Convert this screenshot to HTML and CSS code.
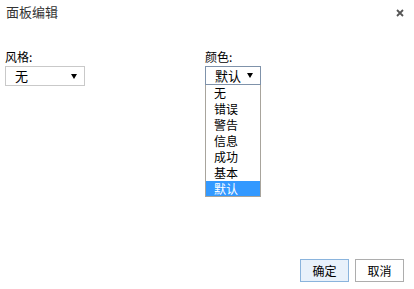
FILE: index.html
```html
<!DOCTYPE html>
<html lang="zh-CN">
<head>
	<meta charset="UTF-8">
	<title>面板编辑</title>
	<link rel="stylesheet" href="styles.css">
</head>
<body>
	<div class="dialog">
		<div class="header">
			<span class="title">面板编辑</span>
			<svg class="close" width="8" height="8" viewBox="0 0 8 8"><path d="M1 1L7 7M7 1L1 7" stroke="#555" stroke-width="1.8"/></svg>
		</div>
		<div class="content">
			<div class="field field-style">
				<div class="label">风格:</div>
				<div class="select select-style">
					<span class="value">无</span>
					<span class="arrow"></span>
				</div>
			</div>
			<div class="field field-color">
				<div class="label">颜色:</div>
				<div class="select select-color open">
					<span class="value">默认</span>
					<span class="arrow"></span>
				</div>
				<ul class="options">
					<li class="option">无</li>
					<li class="option">错误</li>
					<li class="option">警告</li>
					<li class="option">信息</li>
					<li class="option">成功</li>
					<li class="option">基本</li>
					<li class="option selected">默认</li>
				</ul>
			</div>
		</div>
		<div class="footer">
			<button type="button" class="btn btn-primary">确定</button>
			<button type="button" class="btn">取消</button>
		</div>
	</div>
</body>
</html>
```
FILE: styles.css
```css
body{
	margin: 0;
	background-color: #fff;
	font-family: "Noto Sans CJK SC", "Noto Sans", sans-serif;
	color: #000;
}
.dialog{
	width: 414px;
	height: 289px;
	display: flex;
	flex-direction: column;
}
.header{
	height: 24px;
	padding: 0 10px 0 6px;
	display: flex;
	align-items: center;
	justify-content: space-between;
}
.title{
	font-size: 13px;
	line-height: 16px;
	color: #333;
}
.close{
	margin-top: 1px;
}
.content{
	flex: 1;
	display: flex;
	padding: 26px 0 0 5px;
}
.field{
	display: flex;
	flex-direction: column;
}
.field-style{
	width: 200px;
}
.label{
	font-size: 12px;
	line-height: 14px;
	height: 16px;
}
.select{
	height: 18px;
	border: 1px solid #c9c9c9;
	display: flex;
	align-items: center;
	justify-content: space-between;
	padding: 0 7px 0 9px;
	font-size: 13px;
	line-height: 16px;
}
.select-style{
	width: 62px;
}
.select-color{
	width: 38px;
	border-color: #7f92aa;
	height: 17px;
}
.arrow{
	width: 0;
	height: 0;
	border-left: 3px solid transparent;
	border-right: 3px solid transparent;
	border-top: 5px solid #000;
}
.options{
	list-style: none;
	margin: 0;
	padding: 0;
	width: 54px;
	border: 1px solid #a8a49c;
	border-top: none;
}
.option{
	height: 16px;
	line-height: 16px;
	font-size: 12px;
	padding-left: 8px;
}
.option.selected{
	background-color: #3399ff;
	color: #fff;
	height: 15px;
}
.footer{
	display: flex;
	justify-content: flex-end;
	gap: 6px;
	padding: 0 10px 7px 0;
}
.btn{
	width: 49px;
	height: 23px;
	padding: 0;
	border: 1px solid #adadad;
	background-color: #fff;
	font-family: "Noto Sans CJK SC", sans-serif;
	font-size: 12px;
	color: #000;
}
.btn-primary{
	border-color: #8ab4dd;
	background-color: #e8f1fb;
}
```
